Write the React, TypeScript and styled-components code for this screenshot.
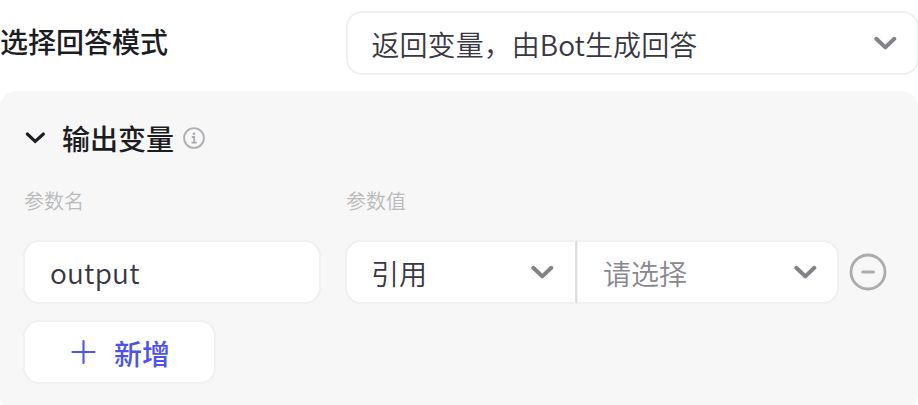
import React from "react";
import styled, { createGlobalStyle } from "styled-components";

const GlobalStyle = createGlobalStyle`
  * { box-sizing: border-box; }
  html, body { margin: 0; background: #fff; overflow: hidden; }
  body {
    font-family: "Noto Sans CJK SC", "Noto Sans", sans-serif;
    font-size: 28px;
    line-height: 40px;
    color: #383743;
  }
  button, input { font: inherit; color: inherit; }
`;

const Page = styled.main`
  width: 918px;
  height: 405px;
  padding-top: 11px;
  overflow: hidden;
`;

const ModeRow = styled.div`
  display: grid;
  grid-template-columns: 345.5px 573.5px;
  margin-bottom: 16px;
`;

const ModeLabel = styled.div`
  padding-top: 10px;
  font-weight: 500;
  color: #1c1d23;
`;

const Control = styled.div<{ $joined?: "left" | "right" }>`
  display: flex;
  align-items: center;
  justify-content: space-between;
  height: 64px;
  padding: 0 ${(p) => (p.$joined === "left" ? "21px" : "20px")} 0
    ${(p) => (p.$joined === "right" ? "25px" : "24px")};
  background: #fff;
  border: 2px solid #f0f0f1;
  border-radius: ${(p) =>
    p.$joined === "left" ? "16px 0 0 16px" : p.$joined === "right" ? "0 16px 16px 0" : "16px"};
  ${(p) => p.$joined === "left" && "border-right: 2px solid #dededf;"}
  ${(p) => p.$joined === "right" && "border-left-width: 1px;"}
`;

const ControlText = styled.span<{ $muted?: boolean }>`
  margin-top: 2px;
  font-weight: 350;
  letter-spacing: 0.06px;
  white-space: nowrap;
  color: ${(p) => (p.$muted ? "#88888d" : "#383743")};
`;

const NameInput = styled.input`
  width: 298px;
  height: 64px;
  padding: 0 25px;
  border: 2px solid #f0f0f1;
  border-radius: 16px;
  background: #fff;
  font-weight: 350;
  letter-spacing: 0.2px;
  outline: none;
`;

const Panel = styled.section`
  height: 320px;
  padding: 27px 0 0 23px;
  background: #f7f7f7;
  border-radius: 16px;
`;

const PanelHeader = styled.header`
  display: flex;
  align-items: center;
  height: 40px;
`;

const PanelTitle = styled.h2`
  margin: 0 9px 0 15px;
  font-size: 28px;
  font-weight: 500;
  line-height: 40px;
  color: #1c1d23;
`;

const Columns = styled.div`
  display: grid;
  grid-template-columns: 298px 494px 40px;
  column-gap: 24px;
`;

const Labels = styled(Columns)`
  margin: 28px 0 24px;
  padding-left: 1px;
  font-size: 20px;
  line-height: 30px;
  font-weight: 350;
  color: #bababa;
`;

const ParamRow = styled(Columns)`
  align-items: center;
`;

const ValueGroup = styled.div`
  display: grid;
  grid-template-columns: 232px 262px;
`;

const RemoveButton = styled.button`
  display: flex;
  width: 40px;
  height: 40px;
  margin-left: -16px;
  padding: 0;
  border: 0;
  background: none;
`;

const AddButton = styled.button`
  display: flex;
  align-items: center;
  width: 193px;
  height: 64px;
  margin-top: 16px;
  padding: 0 0 0 45px;
  border: 2px solid #f0f0f5;
  border-radius: 16px;
  background: #fff;
  color: #4d53e8;
  font-weight: 500;
`;

const AddText = styled.span`
  margin: 2px 0 0 18px;
`;

const Chevron = ({ color, width = 4 }: { color: string; width?: number }) => (
  <svg width="24" height="24" viewBox="0 0 24 24" fill="none">
    <path d="M3.3 7.8 12.3 16.4 21.3 7.8" stroke={color} strokeWidth={width} strokeLinecap="round" strokeLinejoin="round" />
  </svg>
);

const CollapseIcon = () => (
  <svg width="24" height="24" viewBox="0 0 24 24" fill="none">
    <path d="M4.3 8 12.2 15.3 20.4 8" stroke="#1c1d23" strokeWidth="3.1" strokeLinecap="round" />
  </svg>
);

const InfoIcon = () => (
  <svg width="22" height="22" viewBox="0 0 22 22" fill="none">
    <circle cx="11" cy="11" r="9.9" stroke="#b0b0b4" strokeWidth="1.9" />
    <circle cx="11" cy="6.8" r="1.4" fill="#aaaab0" />
    <path d="M8.8 10h2.4v5.5M8.5 15.6h5.2" stroke="#aaaab0" strokeWidth="1.8" />
  </svg>
);

const MinusIcon = () => (
  <svg width="40" height="40" viewBox="0 0 40 40" fill="none">
    <circle cx="21" cy="20" r="17" stroke="#ababab" strokeWidth="2.8" />
    <path d="M15.8 20h10.6" stroke="#ababab" strokeWidth="3.2" strokeLinecap="round" />
  </svg>
);

const PlusIcon = () => (
  <svg width="26" height="26" viewBox="0 0 26 26" fill="none">
    <path d="M13.5 2v22M2.5 13h22" stroke="#4d53e8" strokeWidth="2.1" strokeLinecap="round" />
  </svg>
);

export default function App() {
  return (
    <Page>
      <GlobalStyle />
      <ModeRow>
        <ModeLabel>选择回答模式</ModeLabel>
        <Control>
          <ControlText>返回变量，由Bot生成回答</ControlText>
          <Chevron color="#828287" />
        </Control>
      </ModeRow>
      <Panel>
        <PanelHeader>
          <CollapseIcon />
          <PanelTitle>输出变量</PanelTitle>
          <InfoIcon />
        </PanelHeader>
        <Labels>
          <span>参数名</span>
          <span>参数值</span>
        </Labels>
        <ParamRow>
          <NameInput defaultValue="output" />
          <ValueGroup>
            <Control $joined="left">
              <ControlText>引用</ControlText>
              <Chevron color="#828287" />
            </Control>
            <Control $joined="right">
              <ControlText $muted>请选择</ControlText>
              <Chevron color="#828287" />
            </Control>
          </ValueGroup>
          <RemoveButton aria-label="删除">
            <MinusIcon />
          </RemoveButton>
        </ParamRow>
        <AddButton>
          <PlusIcon />
          <AddText>新增</AddText>
        </AddButton>
      </Panel>
    </Page>
  );
}
